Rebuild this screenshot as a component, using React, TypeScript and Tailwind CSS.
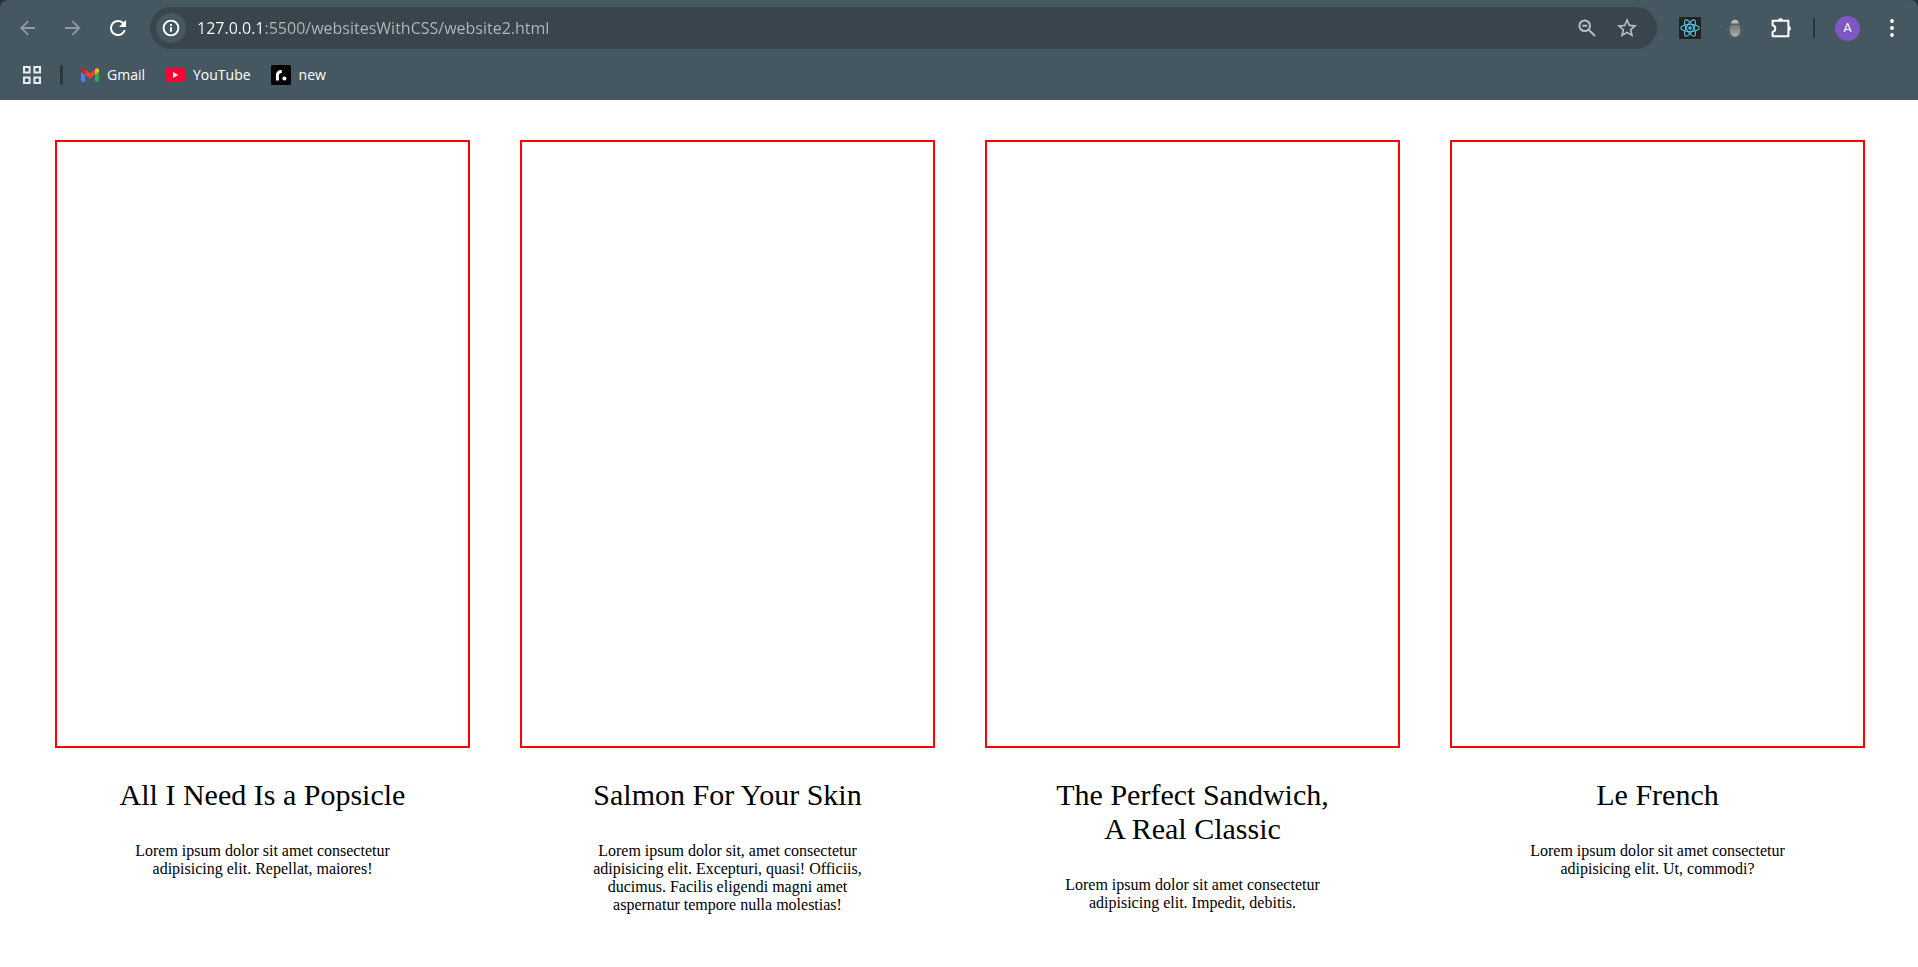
import type { ReactNode } from "react";

type Article = { title: ReactNode; text: string };

const articles: Article[] = [
  {
    title: "All I Need Is a Popsicle",
    text: "Lorem ipsum dolor sit amet consectetur adipisicing elit. Repellat, maiores!",
  },
  {
    title: "Salmon For Your Skin",
    text: "Lorem ipsum dolor sit, amet consectetur adipisicing elit. Excepturi, quasi! Officiis, ducimus. Facilis eligendi magni amet aspernatur tempore nulla molestias!",
  },
  {
    title: (
      <>
        The Perfect Sandwich,
        <br />A Real Classic
      </>
    ),
    text: "Lorem ipsum dolor sit amet consectetur adipisicing elit. Impedit, debitis.",
  },
  {
    title: "Le French",
    text: "Lorem ipsum dolor sit amet consectetur adipisicing elit. Ut, commodi?",
  },
];

function ToolButton({ label, children }: { label: string; children: ReactNode }) {
  return (
    <button type="button" aria-label={label} className="flex h-11 w-11 shrink-0 items-center justify-center">
      {children}
    </button>
  );
}

function BackIcon() {
  return (
    <svg width="20" height="20" viewBox="0 0 20 20" fill="none" stroke="#8f9a9f" strokeWidth="1.9">
      <path d="M17 10H3.5M10.2 3.2L3.4 10l6.8 6.8" />
    </svg>
  );
}

function ForwardIcon() {
  return (
    <svg width="20" height="20" viewBox="0 0 20 20" fill="none" stroke="#8f9a9f" strokeWidth="1.9">
      <path d="M2 10h14M9.4 3.2l6.8 6.8-6.8 6.8" />
    </svg>
  );
}

function ReloadIcon() {
  return (
    <svg width="24" height="24" viewBox="4 4 16 16" fill="#fff" className="p-1">
      <path d="M17.65 6.35A7.96 7.96 0 0 0 12 4a8 8 0 1 0 7.73 10h-2.08A6 6 0 1 1 12 6c1.66 0 3.14.69 4.22 1.78L13 11h7V4z" />
    </svg>
  );
}

function InfoIcon() {
  return (
    <svg width="18" height="18" viewBox="0 0 18 18" fill="none" stroke="#fff" strokeWidth="1.9">
      <circle cx="9" cy="9" r="7.4" />
      <path d="M9 8.2v4.6M9 5v2" />
    </svg>
  );
}

function ZoomOutIcon() {
  return (
    <svg width="18" height="18" viewBox="0 0 18 18" fill="none" stroke="#bcbfc1" strokeWidth="2">
      <circle cx="6.7" cy="6.7" r="5.3" />
      <path d="M10.6 10.6l6.4 6.4M4.2 6.7h5" />
    </svg>
  );
}

function StarIcon() {
  return (
    <svg width="22" height="22" viewBox="1 1 22 22" fill="#bcbfc1">
      <path d="M22 9.24l-7.19-.62L12 2 9.19 8.63 2 9.24l5.46 4.73L5.82 21 12 17.27 18.18 21l-1.63-7.03L22 9.24zM12 15.4l-3.76 2.27 1-4.28-3.32-2.88 4.38-.38L12 6.1l1.71 4.04 4.38.38-3.32 2.88 1 4.28L12 15.4z" />
    </svg>
  );
}

function ReactIcon() {
  return (
    <svg width="22" height="22" viewBox="0 0 21 21" fill="none" stroke="#53c1de" strokeWidth="1.1">
      <rect width="21" height="21" rx="1" fill="#222" stroke="none" />
      <ellipse cx="10.5" cy="10.5" rx="8.8" ry="3.4" />
      <ellipse cx="10.5" cy="10.5" rx="8.8" ry="3.4" transform="rotate(60 10.5 10.5)" />
      <ellipse cx="10.5" cy="10.5" rx="8.8" ry="3.4" transform="rotate(120 10.5 10.5)" />
      <circle cx="10.5" cy="10.5" r="1.7" fill="#53c1de" stroke="none" />
    </svg>
  );
}

function BugIcon() {
  return (
    <svg width="20" height="20" viewBox="0 0 20 20">
      <defs>
        <linearGradient id="bug-body" x1="0" y1="0" x2="0" y2="1">
          <stop offset="0" stopColor="#757575" />
          <stop offset="1" stopColor="#adadad" />
        </linearGradient>
      </defs>
      <path
        d="M5.4 9L2.6 6.6M5 12H1.4M5.4 15l-2.8 2.4M14.6 9l2.8-2.4M15 12h3.6M14.6 15l2.8 2.4"
        stroke="#5d686d"
        strokeWidth="1"
        fill="none"
      />
      <path d="M6.2 5.6a3.8 3.9 0 0 1 7.6 0z" fill="#b8b8b8" />
      <path d="M6.2 6.8h7.6c.9 1.2 1.4 2.8 1.4 4.6 0 4.2-2.1 7.4-5.2 7.4s-5.2-3.2-5.2-7.4c0-1.8.5-3.4 1.4-4.6z" fill="url(#bug-body)" />
    </svg>
  );
}

function PuzzleIcon() {
  return (
    <svg width="24" height="24" viewBox="0 0 24 24" fill="none" stroke="#fff" strokeWidth="2" strokeLinejoin="round">
      <path d="M4.6 4.8H20.4V20.2H4.6V16C8.2 15.2 8.2 10 4.6 9.2Z" />
      <path d="M10.4 4a2.2 2.2 0 0 1 4.2 0zM21.2 10.4a2.3 2.3 0 0 1 0 4.2z" fill="#fff" strokeWidth="0.8" />
    </svg>
  );
}

function DotsIcon() {
  return (
    <svg width="20" height="20" viewBox="0 0 20 20" fill="#fff">
      <circle cx="10" cy="3" r="1.9" />
      <circle cx="10" cy="10" r="1.9" />
      <circle cx="10" cy="17" r="1.9" />
    </svg>
  );
}

function AppsIcon() {
  return (
    <svg width="18" height="18" viewBox="0 0 18 18" fill="none" stroke="#e9edef" strokeWidth="2">
      <path d="M1 1h5.6v5.6H1zM11.4 1H17v5.6h-5.6zM1 11.4h5.6V17H1zM11.4 11.4H17V17h-5.6z" />
    </svg>
  );
}

function GmailIcon() {
  return (
    <svg width="18" height="14" viewBox="52 42 88 66">
      <path fill="#4285f4" d="M58 108h14V74L52 59v43c0 3.32 2.69 6 6 6" />
      <path fill="#34a853" d="M120 108h14c3.32 0 6-2.69 6-6V59l-20 15" />
      <path fill="#fbbc04" d="M120 48v26l20-15v-8c0-7.42-8.47-11.65-14.4-7.2" />
      <path fill="#ea4335" d="M72 74V48l24 18 24-18v26L96 92" />
      <path fill="#c5221f" d="M52 51v8l20 15V48l-5.6-4.2c-5.94-4.45-14.4-.22-14.4 7.2" />
    </svg>
  );
}

function YouTubeIcon() {
  return (
    <svg width="20" height="14" viewBox="0 0 20 14">
      <rect width="20" height="14" rx="3.4" fill="#ff0033" />
      <path d="M8 4l5.2 3L8 10z" fill="#fff" />
    </svg>
  );
}

function NewIcon() {
  return (
    <svg width="20" height="20" viewBox="0 0 20 20">
      <rect width="20" height="20" rx="1.5" fill="#000" />
      <path d="M6.4 15.4V10.6c0-2.6 1.4-4 4.4-4" fill="none" stroke="#fff" strokeWidth="3" />
      <circle cx="13.4" cy="13.4" r="2" fill="#fff" />
    </svg>
  );
}

function Bookmark({ icon, label }: { icon: ReactNode; label: string }) {
  return (
    <a href="#" className="flex items-center gap-2 text-[14px] leading-5 text-white">
      {icon}
      {label}
    </a>
  );
}

function BrowserBar() {
  return (
    <div className="bg-[#273236] font-['Open_Sans',sans-serif]">
      <header className="h-[100px] rounded-t-lg bg-[#455760]">
        <div className="flex h-14 items-center pl-1.5">
          <nav aria-label="Navigation" className="flex gap-px">
            <ToolButton label="Back">
              <BackIcon />
            </ToolButton>
            <ToolButton label="Forward">
              <ForwardIcon />
            </ToolButton>
            <ToolButton label="Reload">
              <ReloadIcon />
            </ToolButton>
          </nav>

          <div className="ml-2.5 flex h-[42px] min-w-0 flex-1 items-center rounded-full bg-[#39454c] pr-[19px] pl-1.5">
            <button
              type="button"
              aria-label="View site information"
              className="flex h-[30px] w-[30px] shrink-0 items-center justify-center rounded-full bg-[#455760]"
            >
              <InfoIcon />
            </button>
            <input
              type="text"
              aria-label="Address"
              defaultValue="127.0.0.1:5500/websitesWithCSS/website2.html"
              className="ml-[11px] h-8 min-w-0 flex-1 bg-[linear-gradient(90deg,#ffffff_67px,#b4b8ba_67px)] bg-clip-text text-[16px] text-transparent outline-none"
            />
            <div className="flex items-center gap-5">
              <button type="button" aria-label="Zoom">
                <ZoomOutIcon />
              </button>
              <button type="button" aria-label="Bookmark this page">
                <StarIcon />
              </button>
            </div>
          </div>

          <div className="ml-[11px] flex gap-px">
            <ToolButton label="React Developer Tools">
              <ReactIcon />
            </ToolButton>
            <ToolButton label="Bug extension">
              <BugIcon />
            </ToolButton>
            <ToolButton label="Extensions">
              <PuzzleIcon />
            </ToolButton>
          </div>
          <div className="ml-[11px] h-5 w-0.5 bg-[#2b363b]" />
          <button
            type="button"
            aria-label="Profile"
            className="ml-5 flex h-[25px] w-[25px] items-center justify-center rounded-full bg-[#7e57c2] font-['Roboto',sans-serif] text-[13px] text-white"
          >
            A
          </button>
          <button type="button" aria-label="Menu" className="mr-4 ml-[22px]">
            <DotsIcon />
          </button>
        </div>

        <nav aria-label="Bookmarks" className="flex h-[37px] items-center pl-[23px]">
          <button type="button" aria-label="Apps">
            <AppsIcon />
          </button>
          <div className="mr-[18px] ml-[19px] h-5 w-[3px] rounded-sm bg-[#2b363b]" />
          <div className="flex items-center gap-5">
            <Bookmark icon={<GmailIcon />} label="Gmail" />
            <Bookmark icon={<YouTubeIcon />} label="YouTube" />
            <Bookmark icon={<NewIcon />} label="new" />
          </div>
        </nav>
      </header>
    </div>
  );
}

export default function App() {
  return (
    <div className="min-h-screen bg-white">
      <BrowserBar />
      <main className="grid grid-cols-4 gap-[50px] pt-10 pr-[53px] pb-10 pl-[55px] text-center font-['Liberation_Serif',serif] text-black">
        {articles.map((article, index) => (
          <article key={index} className="flex flex-col items-center">
            <div className="h-[608px] w-full border-2 border-[#ff0000]" />
            <h2 className="mt-[30px] text-[30px] leading-[34px]">{article.title}</h2>
            <p className="mt-[30px] w-[275px] text-[16px] leading-[18px]">{article.text}</p>
          </article>
        ))}
      </main>
    </div>
  );
}
